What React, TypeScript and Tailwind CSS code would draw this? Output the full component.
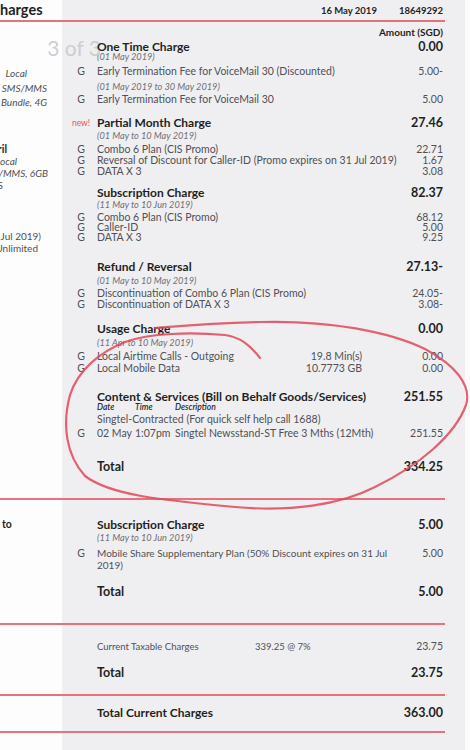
import React from 'react';

const PANEL = 'bg-[#efeff1]';

type RowProps = {
  mt?: string;
  mark?: React.ReactNode;
  amt?: string;
  mid?: string;
  kind?: 'head' | 'date' | 'item' | 'total';
  children?: React.ReactNode;
};

const Row = ({ mt = '', mark, amt, mid, kind = 'item', children }: RowProps) => {
  const text =
    kind === 'head'
      ? 'text-[12px] font-bold text-[#1f1f22]'
      : kind === 'total'
      ? 'text-[12.5px] font-bold text-[#1f1f22]'
      : kind === 'date'
      ? 'text-[9.2px] italic text-[#707076]'
      : 'text-[10.5px] text-[#505056]';
  const amtCls =
    kind === 'head' || kind === 'total'
      ? 'text-[12.5px] font-bold text-[#1f1f22]'
      : 'text-[10.5px] text-[#505056]';
  return (
    <div className={`flex h-[10px] items-center ${mt}`}>
      <div className="relative w-[35px] shrink-0 pl-[3px] text-center text-[10.5px] text-[#505056]">{mark}</div>
      <div className={`min-w-0 flex-1 whitespace-nowrap ${text}`}>{children}</div>
      {mid && <div className="whitespace-nowrap pr-[36px] text-[10.5px] text-[#505056]">{mid}</div>}
      <div className={`w-[45px] shrink-0 whitespace-nowrap text-right ${amtCls}`}>{amt}</div>
    </div>
  );
};

const Frag = ({ mt, pr, bold, upright, children }: { mt: string; pr: string; bold?: boolean; upright?: boolean; children: React.ReactNode }) => (
  <div className={`flex h-[10px] items-center justify-end ${mt} ${pr}`}>
    <span
      className={`whitespace-nowrap ${
        bold ? 'text-[10.5px] font-bold text-[#1f1f22]' : upright ? 'text-[10px] text-[#505056]' : 'text-[10px] italic text-[#505056]'
      }`}
    >
      {children}
    </span>
  </div>
);

const Rule = () => (
  <div className="flex h-[2px]">
    <div className="w-[445px] bg-[#e5737a]" />
    <div className={`w-[20px] ${PANEL}`} />
  </div>
);

const Section = ({ h, left, children }: { h: string; left?: React.ReactNode; children: React.ReactNode }) => (
  <div className={`flex ${h}`}>
    <div className="w-[62px] shrink-0 overflow-hidden bg-[#fdfdfd]">{left}</div>
    <div className={`w-[403px] shrink-0 pr-[22px] ${PANEL}`}>{children}</div>
  </div>
);

const G = 'G';

export default function App() {
  return (
    <div className="relative h-[750px] w-[470px] overflow-hidden bg-[#fbfbfc] font-['Lato','Open_Sans',sans-serif]">
      {/* header */}
      <div className="flex h-[20px]">
        <div className="flex w-[62px] shrink-0 items-center bg-[#fdfdfd]">
          <span className="text-[14.5px] font-bold text-[#1f1f22]">harges</span>
        </div>
        <div className={`flex w-[403px] shrink-0 items-center justify-end gap-[22px] pr-[22px] pt-[2px] text-[9.5px] font-bold text-[#1f1f22] ${PANEL}`}>
          <span>16 May 2019</span>
          <span>18649292</span>
        </div>
      </div>
      <Rule />

      <Section
        h="h-[476px]"
        left={
          <>
            <Frag mt="mt-[46px]" pr="pr-[35px]">Local</Frag>
            <Frag mt="mt-[5px]" pr="pr-[15px]">Unlimited SMS/MMS</Frag>
            <Frag mt="mt-[4px]" pr="pr-[15px]">3GB Data Bundle, 4G</Frag>
            <Frag mt="mt-[38px]" pr="pr-[55px]" bold>April</Frag>
            <Frag mt="mt-[1px]" pr="pr-[45px]">Unlimited Local</Frag>
            <Frag mt="mt-[2px]" pr="pr-[14px]">Unlimited SMS/MMS, 6GB</Frag>
            <Frag mt="mt-[2px]" pr="pr-[59px]" upright>4G LTE/S</Frag>
            <Frag mt="mt-[41px]" pr="pr-[21px]" upright>expires on 31 Jul 2019)</Frag>
            <Frag mt="mt-[2px]" pr="pr-[24px]" upright>Unlimited</Frag>
          </>
        }
      >
        <div className="mt-[5px] flex h-[10px] items-center justify-end text-[10px] font-bold text-[#1f1f22]">Amount (SGD)</div>
        <Row
          mt="mt-[5px]"
          kind="head"
          amt="0.00"
          mark={
            <span className="absolute right-[-4px] top-1/2 -translate-y-1/2 whitespace-nowrap text-[21px] leading-none text-[#cdcdd2]">
              3 of 3
            </span>
          }
        >
          <span className="relative">One Time Charge</span>
        </Row>
        <Row kind="date">(01 May 2019)</Row>
        <Row mt="mt-[5px]" mark={G} amt="5.00-">Early Termination Fee for VoiceMail 30 (Discounted)</Row>
        <Row mt="mt-[5px]" kind="date">(01 May 2019 to 30 May 2019)</Row>
        <Row mt="mt-[3px]" mark={G} amt="5.00">Early Termination Fee for VoiceMail 30</Row>

        <Row mt="mt-[13px]" kind="head" amt="27.46" mark={<span className="text-[8.5px] text-[#e4574f]">new!</span>}>
          Partial Month Charge
        </Row>
        <Row mt="mt-[3px]" kind="date">(01 May to 10 May 2019)</Row>
        <Row mt="mt-[4px]" mark={G} amt="22.71">Combo 6 Plan (CIS Promo)</Row>
        <Row mt="mt-[1px]" mark={G} amt="1.67">Reversal of Discount for Caller-ID (Promo expires on 31 Jul 2019)</Row>
        <Row mt="mt-[1px]" mark={G} amt="3.08">DATA X 3</Row>

        <Row mt="mt-[11px]" kind="head" amt="82.37">Subscription Charge</Row>
        <Row mt="mt-[2px]" kind="date">(11 May to 10 Jun 2019)</Row>
        <Row mt="mt-[3px]" mark={G} amt="68.12">Combo 6 Plan (CIS Promo)</Row>
        <Row mark={G} amt="5.00">Caller-ID</Row>
        <Row mark={G} amt="9.25">DATA X 3</Row>

        <Row mt="mt-[19px]" kind="head" amt="27.13-">Refund / Reversal</Row>
        <Row mt="mt-[4px]" kind="date">(01 May to 10 May 2019)</Row>
        <Row mt="mt-[3px]" mark={G} amt="24.05-">Discontinuation of Combo 6 Plan (CIS Promo)</Row>
        <Row mt="mt-[1px]" mark={G} amt="3.08-">Discontinuation of DATA X 3</Row>

        <Row mt="mt-[14px]" kind="head" amt="0.00">Usage Charge</Row>
        <Row mt="mt-[4px]" kind="date">(11 Apr to 10 May 2019)</Row>
        <Row mt="mt-[4px]" mark={G} mid="19.8 Min(s)" amt="0.00">Local Airtime Calls - Outgoing</Row>
        <Row mt="mt-[2px]" mark={G} mid="10.7773 GB" amt="0.00">Local Mobile Data</Row>

        <Row mt="mt-[18px]" kind="head" amt="251.55">Content &amp; Services (Bill on Behalf Goods/Services)</Row>
        <div className="flex h-[10px] items-center pl-[35px] text-[8.5px] font-semibold italic text-[#2a2a2e]">
          <span className="w-[38px]">Date</span>
          <span className="w-[40px]">Time</span>
          <span>Description</span>
        </div>
        <Row mt="mt-[3px]">Singtel-Contracted (For quick self help call 1688)</Row>
        <Row mt="mt-[4px]" mark={G} amt="251.55">
          <span className="flex">
            <span className="w-[38px]">02 May</span>
            <span className="w-[40px]">1:07pm</span>
            <span>Singtel Newsstand-ST Free 3 Mths (12Mth)</span>
          </span>
        </Row>
        <Row mt="mt-[23px]" kind="total" amt="334.25">Total</Row>
      </Section>
      <Rule />

      <Section
        h="h-[123px]"
        left={
          <div className="mt-[20px] flex h-[10px] items-center pl-[2px] text-[10.5px] font-bold text-[#1f1f22]">to</div>
        }
      >
        <Row mt="mt-[20px]" kind="head" amt="5.00">Subscription Charge</Row>
        <Row mt="mt-[3px]" kind="date">(11 May to 10 Jun 2019)</Row>
        <div className="mt-[4px] flex">
          <div className="w-[35px] shrink-0 pl-[3px] text-center text-[10.5px] leading-[12px] text-[#505056]">G</div>
          <div className="min-w-0 flex-1 whitespace-nowrap text-[10px] leading-[12px] text-[#505056]">
            Mobile Share Supplementary Plan (50% Discount expires on 31 Jul
            <br />
            2019)
          </div>
          <div className="w-[45px] shrink-0 text-right text-[10.5px] leading-[12px] text-[#505056]">5.00</div>
        </div>
        <Row mt="mt-[16px]" kind="total" amt="5.00">Total</Row>
      </Section>
      <Rule />

      <Section h="h-[69px]">
        <div className="mt-[17px] flex h-[10px] items-center text-[9.5px] text-[#505056]">
          <div className="w-[35px] shrink-0" />
          <span className="w-[158px] shrink-0">Current Taxable Charges</span>
          <span className="flex-1">339.25 @ 7%</span>
          <span className="w-[45px] text-right text-[10.5px]">23.75</span>
        </div>
        <Row mt="mt-[16px]" kind="total" amt="23.75">Total</Row>
      </Section>
      <Rule />

      <Section h="h-[35px]">
        <Row mt="mt-[12px]" kind="head" amt="363.00">Total Current Charges</Row>
      </Section>
      <Rule />
      <Section h="h-[17px]">
        <span />
      </Section>

      {/* hand-drawn red marker over the page */}
      <svg className="pointer-events-none absolute left-0 top-0" width="470" height="750" viewBox="0 0 470 750" fill="none">
        <path
          d="M260,358 C250,345 240,337 225,335 C190,332 150,333 125,342 C100,352 78,370 70,395 C62,425 66,455 85,476 C110,495 160,500 235,507 C290,512 340,505 375,487 C420,465 455,435 466,405 C472,385 455,365 425,349 C390,332 330,320 260,322 C210,323 180,326 155,328"
          stroke="#e2475b"
          strokeWidth="2.2"
          strokeLinecap="round"
          opacity="0.85"
        />
      </svg>
    </div>
  );
}
